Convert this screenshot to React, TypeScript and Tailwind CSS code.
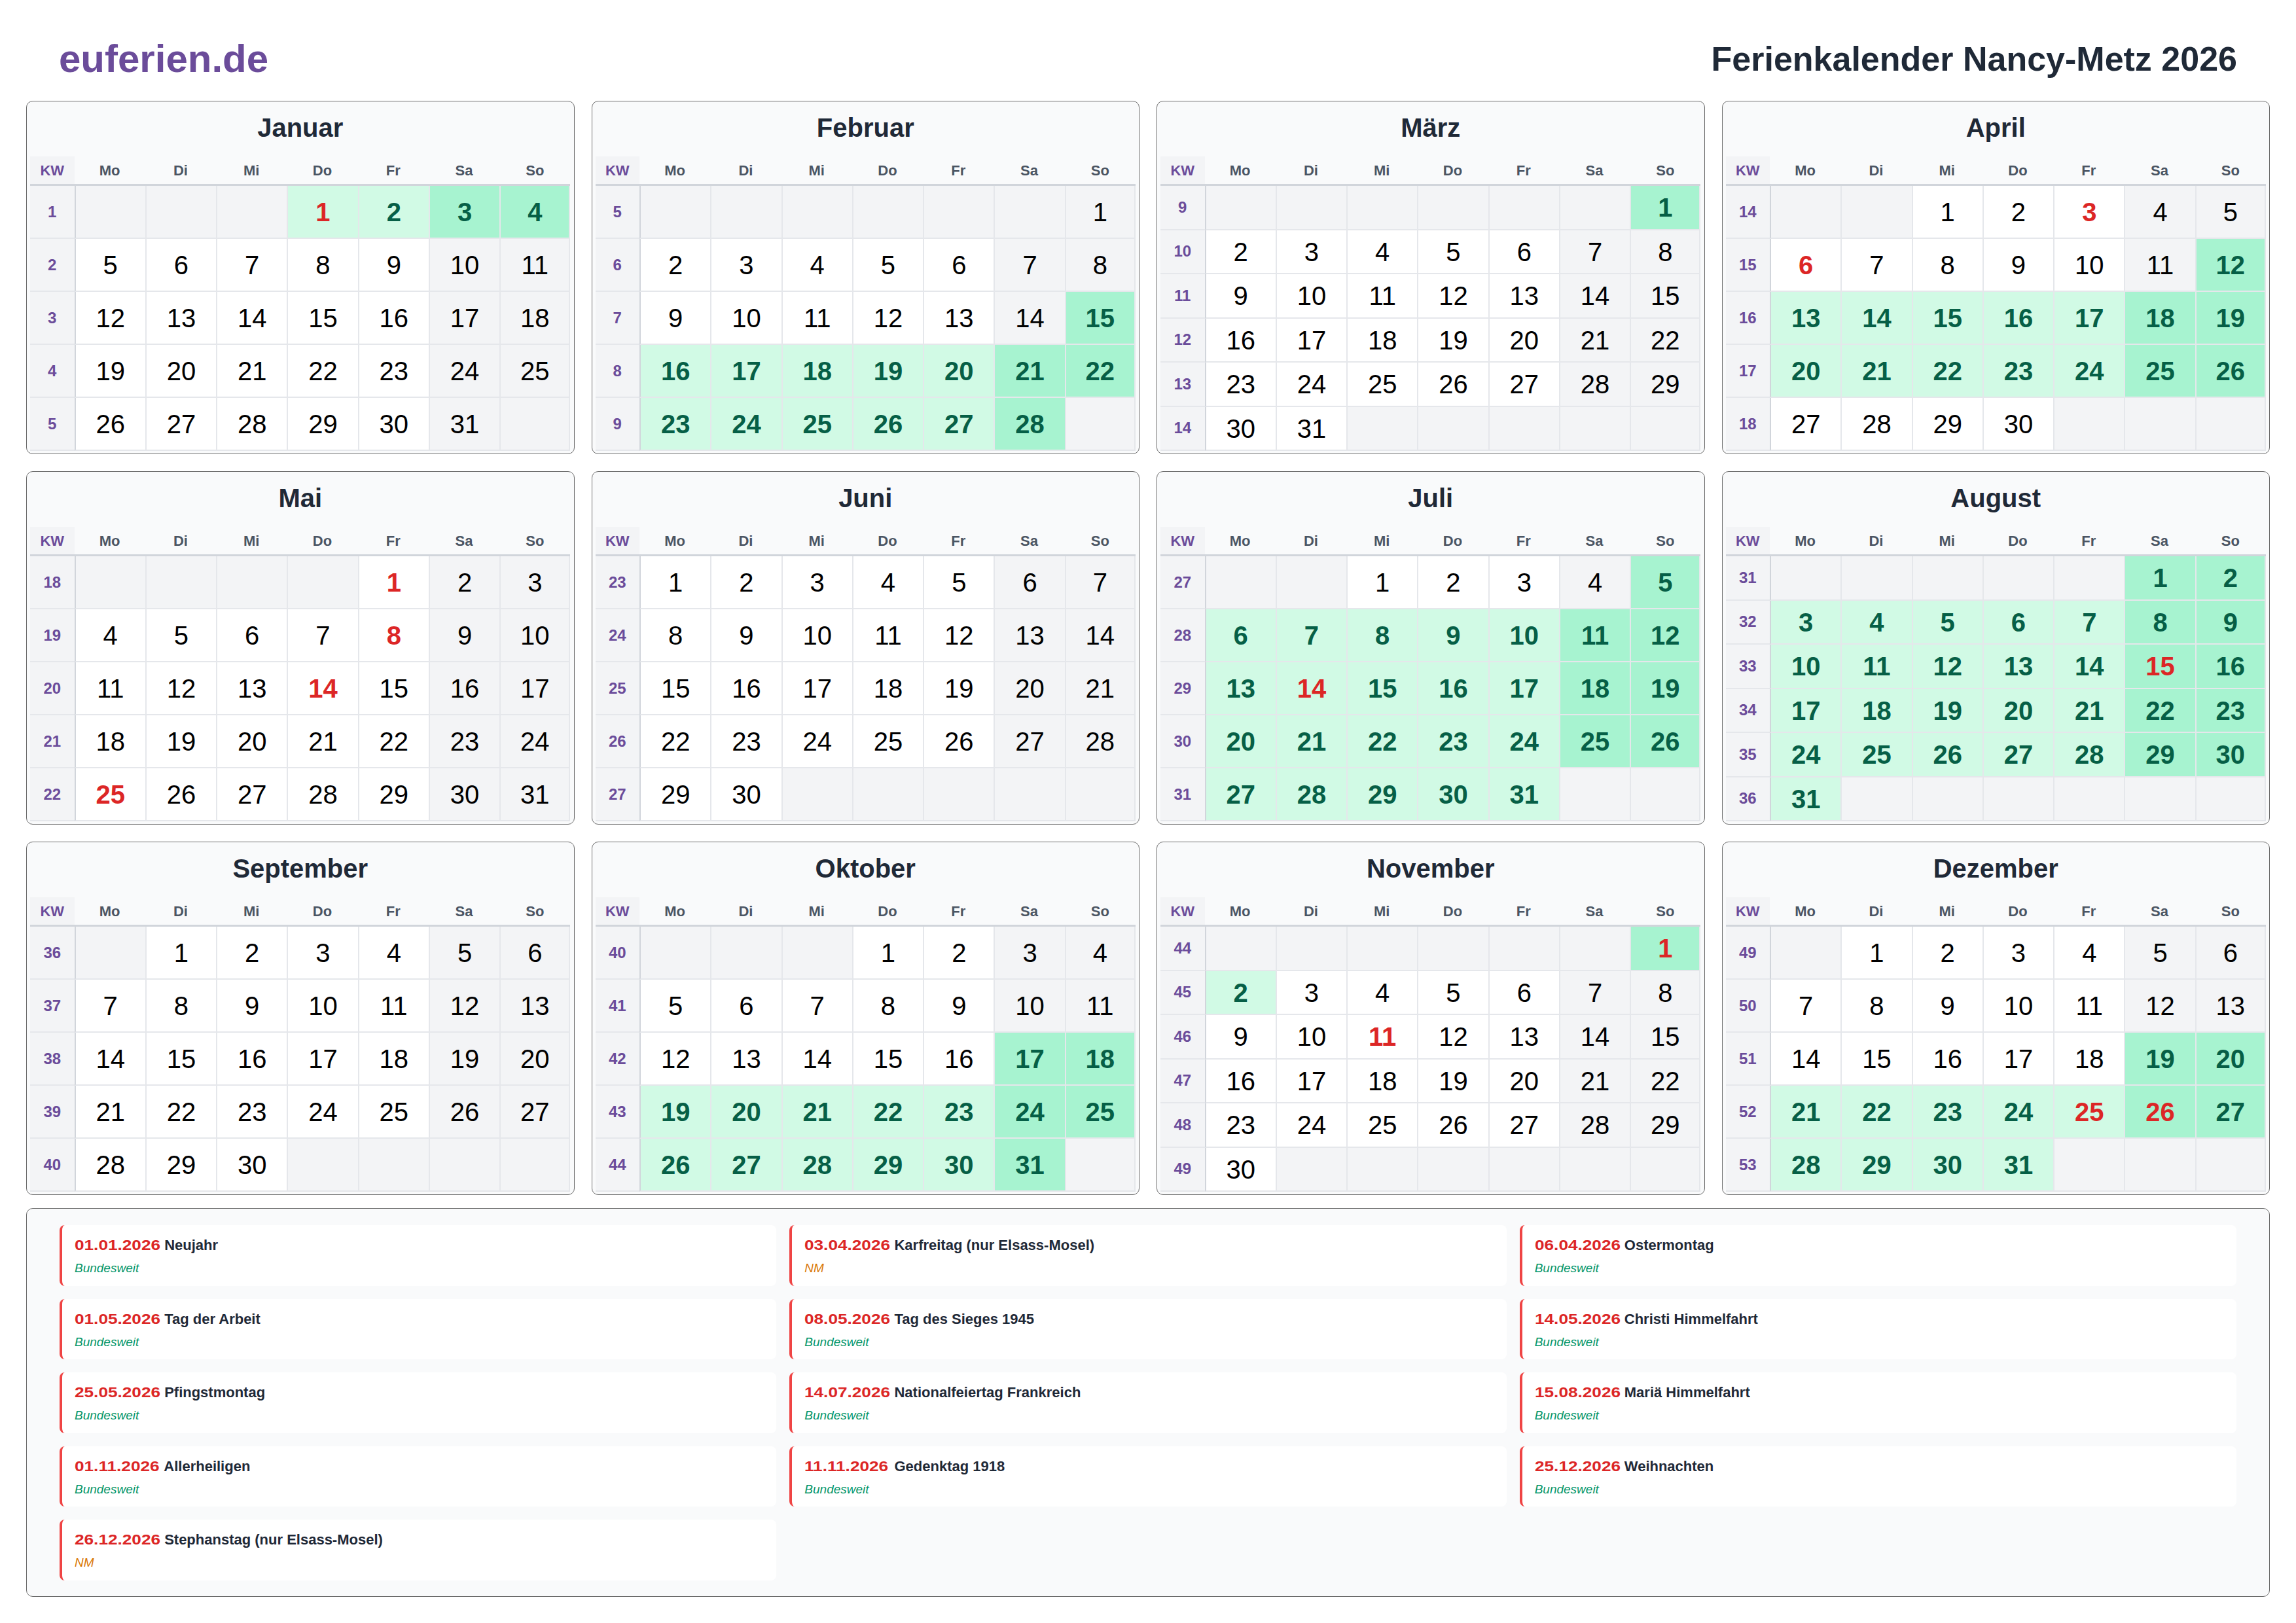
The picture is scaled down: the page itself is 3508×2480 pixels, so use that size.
const MONTHS = ['Januar', 'Februar', 'März', 'April', 'Mai', 'Juni', 'Juli', 'August', 'September', 'Oktober', 'November', 'Dezember']
const DAY_NAMES = ['Mo', 'Di', 'Mi', 'Do', 'Fr', 'Sa', 'So']
const FIRST_KW = [1, 5, 9, 14, 18, 23, 27, 31, 36, 40, 44, 49]

// month index -> red days
const HOLIDAYS: Record<number, number[]> = {
  0: [1],
  3: [3, 6],
  4: [1, 8, 14, 25],
  6: [14],
  7: [15],
  10: [1, 11],
  11: [25, 26],
}

// month index -> [from, to] school holidays
const VACATION: Record<number, [number, number]> = {
  0: [1, 4],
  1: [15, 28],
  2: [1, 1],
  3: [12, 26],
  6: [5, 31],
  7: [1, 31],
  9: [17, 31],
  10: [1, 2],
  11: [19, 31],
}

const NOTES = [
  { date: '01.01.2026', name: 'Neujahr', area: 'Bundesweit' },
  { date: '03.04.2026', name: 'Karfreitag (nur Elsass-Mosel)', area: 'NM' },
  { date: '06.04.2026', name: 'Ostermontag', area: 'Bundesweit' },
  { date: '01.05.2026', name: 'Tag der Arbeit', area: 'Bundesweit' },
  { date: '08.05.2026', name: 'Tag des Sieges 1945', area: 'Bundesweit' },
  { date: '14.05.2026', name: 'Christi Himmelfahrt', area: 'Bundesweit' },
  { date: '25.05.2026', name: 'Pfingstmontag', area: 'Bundesweit' },
  { date: '14.07.2026', name: 'Nationalfeiertag Frankreich', area: 'Bundesweit' },
  { date: '15.08.2026', name: 'Mariä Himmelfahrt', area: 'Bundesweit' },
  { date: '01.11.2026', name: 'Allerheiligen', area: 'Bundesweit' },
  { date: '11.11.2026', name: 'Gedenktag 1918', area: 'Bundesweit' },
  { date: '25.12.2026', name: 'Weihnachten', area: 'Bundesweit' },
  { date: '26.12.2026', name: 'Stephanstag (nur Elsass-Mosel)', area: 'NM' },
]

function DayCell({ month, day, col }: { month: number; day: number | null; col: number }) {
  const weekend = col >= 5
  const range = VACATION[month]
  const vacation = day !== null && range !== undefined && day >= range[0] && day <= range[1]
  const holiday = day !== null && (HOLIDAYS[month] ?? []).includes(day)

  let bg = 'bg-white'
  if (day === null) bg = 'bg-[#f3f4f6]'
  else if (vacation) bg = weekend ? 'bg-[#a7f3d0]' : 'bg-[#d1fae5]'
  else if (weekend) bg = 'bg-[#f3f4f6]'

  let text = 'text-black'
  if (holiday) text = 'text-[#dc2626] font-bold'
  else if (vacation) text = 'text-[#065f46] font-bold'

  return (
    <div
      className={`flex items-center justify-center border-b-2 border-l-2 border-b-[#e5e7eb] pt-[1px] text-[40px] leading-none ${
        col === 0 ? 'border-l-[#d1d5db]' : 'border-l-[#e5e7eb]'
      } ${col === 6 ? 'border-r-2 border-r-[#e5e7eb]' : ''} ${bg} ${text}`}
    >
      {day}
    </div>
  )
}

function MonthCard({ month }: { month: number }) {
  const offset = (new Date(2026, month, 1).getDay() + 6) % 7
  const length = new Date(2026, month + 1, 0).getDate()
  const rows = Math.ceil((offset + length) / 7)

  return (
    <div className="flex flex-col rounded-[10px] border border-[#6b6b6b] bg-[#f9fafb] px-[5px] pb-[4px]">
      <div className="pt-[17px] pb-[21px] text-center text-[40px] leading-[46px] font-bold text-[#1f2937]">{MONTHS[month]}</div>
      <div className={`grid flex-1 grid-cols-[67.5px_repeat(7,1fr)] ${rows === 6 ? 'grid-rows-[45px_repeat(6,1fr)]' : 'grid-rows-[45px_repeat(5,1fr)]'}`}>
        <div className="flex items-center justify-center border-b-[3px] border-[#d1d5db] bg-[#f3f4f6] text-[22px] font-bold text-[#6b4c9a]">KW</div>
        {DAY_NAMES.map(name => (
          <div key={name} className="flex items-center justify-center border-b-[3px] border-[#d1d5db] text-[22px] font-bold text-[#4b5563]">
            {name}
          </div>
        ))}
        {Array.from({ length: rows }).flatMap((_, row) => [
          <div key={`kw-${row}`} className="flex items-center justify-center border-b-2 border-[#e5e7eb] bg-[#f3f4f6] text-[24px] font-bold text-[#6b4c9a]">
            {FIRST_KW[month] + row}
          </div>,
          ...DAY_NAMES.map((name, col) => {
            const n = row * 7 + col - offset + 1
            return <DayCell key={`${row}-${name}`} month={month} day={n >= 1 && n <= length ? n : null} col={col} />
          }),
        ])}
      </div>
    </div>
  )
}

export default function App() {
  return (
    <div className="min-h-[2480px] bg-white px-[40px] pt-[24px] font-['Liberation_Sans',Arial,sans-serif]">
      <header className="flex h-[130px] items-start justify-between px-[50px] pt-[26px]">
        <div className="pt-[1px] text-[60px] leading-[78px] font-bold text-[#6b4c9a]">euferien.de</div>
        <h1 className="pt-[1px] text-[52px] leading-[78px] font-bold text-[#1f2937]">Ferienkalender Nancy-Metz 2026</h1>
      </header>

      <div className="grid grid-cols-4 auto-rows-[540px] gap-[26px]">
        {MONTHS.map((name, i) => (
          <MonthCard key={name} month={i} />
        ))}
      </div>

      <div className="mt-[20px] grid grid-cols-3 gap-[20px] rounded-[10px] border border-[#6b6b6b] bg-[#f9fafb] px-[50px] pt-[25px] pb-[24px]">
        {NOTES.map(note => (
          <div key={note.date} className="h-[92.5px] rounded-[8px] border-l-4 border-[#ef4444] bg-white pt-[15px] pl-[19px]">
            <div className="text-[22px] leading-[32px] font-bold text-[#1f2937]">
              <span className="inline-block w-[131px] origin-left scale-x-[1.19] text-[#dc2626]">{note.date}</span> {note.name}
            </div>
            <div className={`mt-[7px] text-[19px] leading-[24px] italic ${note.area === 'NM' ? 'text-[#d97706]' : 'text-[#059669]'}`}>
              {note.area}
            </div>
          </div>
        ))}
      </div>
    </div>
  )
}
